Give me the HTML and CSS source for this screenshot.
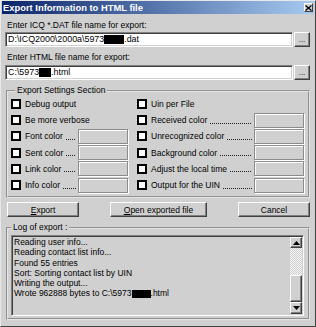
FILE: index.html
```html
<!DOCTYPE html>
<html>
<head>
<meta charset="utf-8">
<link rel="stylesheet" href="styles.css">
</head>
<body>
<div class="window">
  <div class="titlebar">
    <span class="title">Export Information to HTML file</span>
    <span class="close"><svg width="7" height="6" viewBox="0 0 7 6"><path d="M0.5 0.5 L6.5 5.5 M6.5 0.5 L0.5 5.5" stroke="#000" stroke-width="1.3" fill="none"/></svg></span>
  </div>
  <div class="content">
    <div class="label">Enter ICQ *.DAT file name for export:</div>
    <div class="filerow">
      <div class="input">D:\ICQ2000\2000a\5973<span class="redact r1"></span>.dat</div>
      <div class="browse">...</div>
    </div>
    <div class="label second">Enter HTML file name for export:</div>
    <div class="filerow second">
      <div class="input">C:\5973<span class="redact r2"></span>.html</div>
      <div class="browse">...</div>
    </div>

    <fieldset class="group settings">
      <legend>Export Settings Section</legend>
      <div class="grid">
        <div class="row"><span class="cb"></span><span class="lbl">Debug output</span></div>
        <div class="row"><span class="cb"></span><span class="lbl">Be more verbose</span></div>
        <div class="row"><span class="cb"></span><span class="lbl">Font color</span><span class="dots"></span><span class="swatch"></span></div>
        <div class="row"><span class="cb"></span><span class="lbl">Sent color</span><span class="dots"></span><span class="swatch"></span></div>
        <div class="row"><span class="cb"></span><span class="lbl">Link color</span><span class="dots"></span><span class="swatch"></span></div>
        <div class="row"><span class="cb"></span><span class="lbl">Info color</span><span class="dots"></span><span class="swatch"></span></div>
        <div class="row"><span class="cb"></span><span class="lbl">Uin per File</span></div>
        <div class="row"><span class="cb"></span><span class="lbl">Received color</span><span class="dots"></span><span class="swatch"></span></div>
        <div class="row"><span class="cb"></span><span class="lbl">Unrecognized color</span><span class="dots"></span><span class="swatch"></span></div>
        <div class="row"><span class="cb"></span><span class="lbl">Background color</span><span class="dots"></span><span class="swatch"></span></div>
        <div class="row"><span class="cb"></span><span class="lbl">Adjust the local time</span><span class="dots"></span><span class="swatch"></span></div>
        <div class="row"><span class="cb"></span><span class="lbl">Output for the UIN</span><span class="dots"></span><span class="swatch"></span></div>
      </div>
    </fieldset>

    <div class="buttons">
      <div class="btn w72"><span><u>E</u>xport</span></div>
      <div class="btn w97"><span><u>O</u>pen exported file</span></div>
      <div class="btn w72"><span>Cancel</span></div>
    </div>

    <fieldset class="group log">
      <legend>Log of export :</legend>
      <div class="listbox">
        <div class="lines">
          <div>Reading user info...</div>
          <div>Reading contact list info...</div>
          <div>Found 55 entries</div>
          <div>Sort: Sorting contact list by UIN</div>
          <div>Writing the output...</div>
          <div>Wrote 962888 bytes to C:\5973<span class="redact r3"></span>.html</div>
        </div>
        <div class="scrollbar">
          <div class="sbbtn up"><svg width="7" height="4" viewBox="0 0 7 4"><path d="M3.5 0 L7 4 L0 4 Z" fill="#000"/></svg></div>
          <div class="track"></div>
          <div class="thumb"></div>
          <div class="sbbtn down"><svg width="7" height="4" viewBox="0 0 7 4"><path d="M0 0 L7 0 L3.5 4 Z" fill="#000"/></svg></div>
        </div>
      </div>
    </fieldset>
  </div>
</div>
</body>
</html>
```

FILE: styles.css
```css
* { box-sizing: border-box; }
html, body { margin: 0; padding: 0; }
body {
  width: 316px;
  height: 327px;
  overflow: hidden;
  background: #d0d0d0;
  font-family: "Liberation Sans", Arial, sans-serif;
  font-size: 8.5px;
  color: #000;
}
.window {
  width: 316px;
  height: 327px;
  border: 1px solid;
  border-color: #e8e8e8 #404040 #404040 #e8e8e8;
  padding: 0 1px 2px 1px;
  display: flex;
  flex-direction: column;
}
.titlebar {
  height: 13px;
  flex: none;
  background: linear-gradient(to right, #0a246a, #a6caf0);
  display: flex;
  align-items: center;
  justify-content: space-between;
  padding: 0 1px 0 1px;
}
.title {
  color: #fff;
  font-weight: bold;
  font-size: 9.4px;
  line-height: 13px;
  white-space: nowrap;
}
.close {
  width: 9px;
  height: 9px;
  background: #d0d0d0;
  border: 1px solid;
  border-color: #fff #404040 #404040 #fff;
  display: flex;
  align-items: center;
  justify-content: center;
}
.content {
  padding: 6px 4px 0 3px;
}
.label {
  line-height: 11px;
  height: 11px;
  padding-left: 2px;
  white-space: nowrap;
}
.label.second { margin-top: 5px; }
.filerow {
  display: flex;
  height: 15px;
  margin-top: 1px;
  gap: 1px;
}
.filerow.second { margin-top: 2px; }
.input {
  flex: 1;
  background: #fff;
  border: 1px solid;
  border-color: #808080 #fff #fff #808080;
  box-shadow: inset 1px 1px 0 #404040, inset -1px -1px 0 #d0d0d0;
  padding: 0 0 0 2px;
  line-height: 13px;
  font-size: 8.9px;
  white-space: nowrap;
  display: flex;
  align-items: center;
}
.redact {
  display: inline-block;
  background: #000;
  height: 9px;
}
.r1 { width: 20px; }
.r2 { width: 12px; }
.r3 { width: 19px; height: 8px; vertical-align: middle; }
.browse {
  width: 16px;
  flex: none;
  border: 1px solid;
  border-color: #fff #404040 #404040 #fff;
  box-shadow: inset -1px -1px 0 #808080;
  text-align: center;
  line-height: 14px;
  font-size: 8px;
}
.group {
  margin: 0 0 0 1px;
  min-width: 0;
  border: 2px groove #e4e4e4;
}
.group legend {
  line-height: 11px;
  padding: 0 2px;
  white-space: nowrap;
}
.settings {
  margin-top: 5px;
  padding: 0 4px 3px 3px;
}
.settings legend { margin-left: 4px; }
.grid {
  display: grid;
  grid-template-columns: 117px 167px;
  grid-template-rows: repeat(6, 16.2px);
  grid-auto-flow: column;
  column-gap: 9px;
}
.row {
  display: flex;
  align-items: center;
  min-width: 0;
  white-space: nowrap;
}
.cb {
  width: 10px;
  height: 10px;
  flex: none;
  border: 2px solid #000;
  background: #fff;
  margin-right: 4px;
}
.lbl { flex: none; }
.dots {
  flex: 1;
  min-width: 0;
  height: 1px;
  margin: 6px 2px 0 3px;
  background: repeating-linear-gradient(to right, #222 0 1px, transparent 1px 2px);
}
.swatch {
  width: 50px;
  height: 15px;
  flex: none;
  border: 1px solid #8c8c8c;
  box-shadow: inset 1px 1px 0 #fff, 1px 1px 0 #fff;
}
.buttons {
  display: flex;
  justify-content: space-between;
  margin-top: 4px;
  padding-left: 2px;
  height: 15px;
}
.btn {
  height: 15px;
  border: 1px solid;
  border-color: #fff #404040 #404040 #fff;
  box-shadow: inset -1px -1px 0 #808080;
  display: flex;
  align-items: center;
  justify-content: center;
  white-space: nowrap;
}
.w72 { width: 72px; }
.w97 { width: 97px; }
.log {
  margin-top: 5px;
  padding: 2px 4px 2px 3px;
}
.listbox {
  height: 81px;
  display: flex;
  border: 1px solid;
  border-color: #808080 #fff #fff #808080;
  box-shadow: inset 1px 1px 0 #404040, inset -1px -1px 0 #d0d0d0;
  padding: 1px;
}
.lines {
  flex: 1;
  padding-left: 1px;
  line-height: 10.2px;
  white-space: nowrap;
  overflow: hidden;
}
.scrollbar {
  width: 12px;
  flex: none;
  display: flex;
  flex-direction: column;
}
.sbbtn, .thumb {
  background: #d0d0d0;
  border: 1px solid;
  border-color: #fff #404040 #404040 #fff;
  box-shadow: inset -1px -1px 0 #808080;
}
.sbbtn {
  display: flex;
  align-items: center;
  justify-content: center;
}
.up { height: 11px; }
.down { height: 12px; }
.track {
  height: 27px;
  background: repeating-conic-gradient(#f4f4f4 0 25%, #d0d0d0 0 50%) 0 0 / 2px 2px;
}
.thumb { flex: 1; }
```
